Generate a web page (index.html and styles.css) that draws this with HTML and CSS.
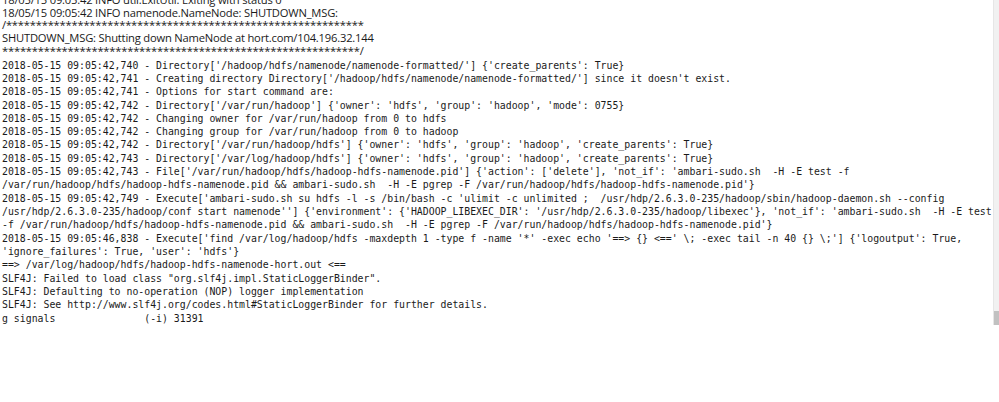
FILE: index.html
```html
<!DOCTYPE html>
<html>
<head>
<meta charset="utf-8">
<link rel="stylesheet" href="styles.css">
</head>
<body>
<div class="frame">
  <div class="log">
    <div class="sans">
      <div class="line">18/05/15 09:05:42 INFO util.ExitUtil: Exiting with status 0</div>
      <div class="line">18/05/15 09:05:42 INFO namenode.NameNode: SHUTDOWN_MSG:</div>
      <div class="line">/************************************************************</div>
      <div class="line">SHUTDOWN_MSG: Shutting down NameNode at hort.com/104.196.32.144</div>
      <div class="line">************************************************************/</div>
    </div>
    <div class="mono">
<div class="line">2018-05-15 09:05:42,740 - Directory['/hadoop/hdfs/namenode/namenode-formatted/'] {'create_parents': True}</div>
<div class="line">2018-05-15 09:05:42,741 - Creating directory Directory['/hadoop/hdfs/namenode/namenode-formatted/'] since it doesn't exist.</div>
<div class="line">2018-05-15 09:05:42,741 - Options for start command are:</div>
<div class="line">2018-05-15 09:05:42,742 - Directory['/var/run/hadoop'] {'owner': 'hdfs', 'group': 'hadoop', 'mode': 0755}</div>
<div class="line">2018-05-15 09:05:42,742 - Changing owner for /var/run/hadoop from 0 to hdfs</div>
<div class="line">2018-05-15 09:05:42,742 - Changing group for /var/run/hadoop from 0 to hadoop</div>
<div class="line">2018-05-15 09:05:42,742 - Directory['/var/run/hadoop/hdfs'] {'owner': 'hdfs', 'group': 'hadoop', 'create_parents': True}</div>
<div class="line">2018-05-15 09:05:42,743 - Directory['/var/log/hadoop/hdfs'] {'owner': 'hdfs', 'group': 'hadoop', 'create_parents': True}</div>
<div class="line">2018-05-15 09:05:42,743 - File['/var/run/hadoop/hdfs/hadoop-hdfs-namenode.pid'] {'action': ['delete'], 'not_if': 'ambari-sudo.sh  -H -E test -f</div>
<div class="line">/var/run/hadoop/hdfs/hadoop-hdfs-namenode.pid &amp;&amp; ambari-sudo.sh  -H -E pgrep -F /var/run/hadoop/hdfs/hadoop-hdfs-namenode.pid'}</div>
<div class="line">2018-05-15 09:05:42,749 - Execute['ambari-sudo.sh su hdfs -l -s /bin/bash -c 'ulimit -c unlimited ;  /usr/hdp/2.6.3.0-235/hadoop/sbin/hadoop-daemon.sh --config</div>
<div class="line">/usr/hdp/2.6.3.0-235/hadoop/conf start namenode''] {'environment': {'HADOOP_LIBEXEC_DIR': '/usr/hdp/2.6.3.0-235/hadoop/libexec'}, 'not_if': 'ambari-sudo.sh  -H -E test</div>
<div class="line">-f /var/run/hadoop/hdfs/hadoop-hdfs-namenode.pid &amp;&amp; ambari-sudo.sh  -H -E pgrep -F /var/run/hadoop/hdfs/hadoop-hdfs-namenode.pid'}</div>
<div class="line">2018-05-15 09:05:46,838 - Execute['find /var/log/hadoop/hdfs -maxdepth 1 -type f -name '*' -exec echo '==&gt; {} &lt;==' \; -exec tail -n 40 {} \;'] {'logoutput': True,</div>
<div class="line">'ignore_failures': True, 'user': 'hdfs'}</div>
<div class="line">==&gt; /var/log/hadoop/hdfs/hadoop-hdfs-namenode-hort.out &lt;==</div>
<div class="line">SLF4J: Failed to load class "org.slf4j.impl.StaticLoggerBinder".</div>
<div class="line">SLF4J: Defaulting to no-operation (NOP) logger implementation</div>
<div class="line">SLF4J: See http://www.slf4j.org/codes.html#StaticLoggerBinder for further details.</div>
<div class="line">g signals               (-i) 31391</div>
    </div>
  </div>
  <div class="scrollbar"><div class="thumb"></div></div>
</div>
</body>
</html>
```

FILE: styles.css
```css
html, body {
  margin: 0;
  padding: 0;
  background: #ffffff;
  overflow: hidden;
}
.frame {
  display: flex;
  width: 999px;
  height: 402px;
  align-items: flex-start;
}
.log {
  flex: 1;
  padding-left: 2px;
  margin-top: -6px;
  color: #1a1a1a;
  overflow: hidden;
}
.line {
  white-space: pre;
}
.sans {
  font-family: "Open Sans", "Liberation Sans", sans-serif;
  font-size: 11.2px;
  line-height: 12.7px;
  letter-spacing: -0.2px;
}
.mono {
  margin-top: 1px;
  font-family: "DejaVu Sans Mono", "Liberation Mono", monospace;
  font-size: 9.85px;
  line-height: 13.33px;
}
.scrollbar {
  width: 5px;
  height: 325px;
  background: #f1f1f1;
  border-left: 1px solid #e6e6e6;
  display: flex;
  flex-direction: column;
  justify-content: flex-end;
}
.thumb {
  height: 14px;
  background: #c1c1c1;
}
```
